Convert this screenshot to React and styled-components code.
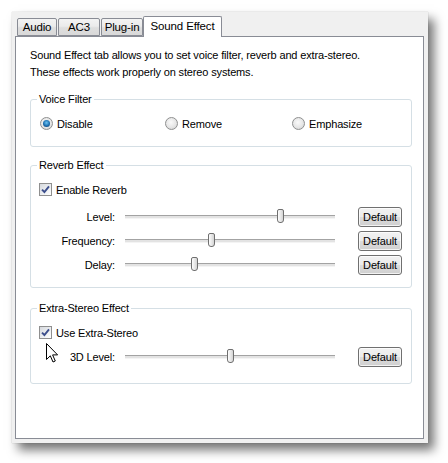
import React from 'react'
import styled, { createGlobalStyle } from 'styled-components'

const GlobalStyle = createGlobalStyle`
  html, body {
    margin: 0;
    padding: 0;
    background: #fff;
  }
  body {
    font-family: "Liberation Sans", Arial, sans-serif;
    font-size: 11px;
    letter-spacing: -0.15px;
    color: #000;
  }
`

const Page = styled.div`
  position: relative;
  width: 448px;
  height: 463px;
  padding: 12px 0 0 12px;
  box-sizing: border-box;
`

const Window = styled.div`
  width: 416px;
  height: 431px;
  box-sizing: border-box;
  background: #f0f0f0;
  padding: 4px 4px 4px 3px;
  display: flex;
  flex-direction: column;
  box-shadow: 6px 7px 10px rgba(0, 0, 0, 0.55), 0 0 1px rgba(0, 0, 0, 0.25);
`

const TabBar = styled.div`
  display: flex;
  align-items: flex-end;
  height: 20px;
  padding-left: 2px;
`

const Tab = styled.div`
  position: relative;
  box-sizing: border-box;
  width: ${p => p.$w}px;
  height: ${p => (p.$active ? 21 : 18)}px;
  margin-right: ${p => (p.$active ? 0 : 1)}px;
  margin-bottom: ${p => (p.$active ? -1 : 0)}px;
  margin-left: ${p => (p.$active ? -1 : 0)}px;
  border: 1px solid #898c95;
  border-bottom: ${p => (p.$active ? 'none' : '1px solid #898c95')};
  border-radius: 2px 2px 0 0;
  background: ${p =>
    p.$active
      ? '#fff'
      : 'linear-gradient(#f3f3f3 0%, #ebebeb 45%, #dedede 55%, #d9d9d9 100%)'};
  z-index: ${p => (p.$active ? 1 : 0)};
  display: flex;
  align-items: center;
  justify-content: center;
  padding-bottom: ${p => (p.$active ? 2 : 0)}px;
  font-size: 11.5px;
`

const TabPanel = styled.div`
  flex: 1;
  background: #fff;
  border: 1px solid #898c95;
  padding: 10px 11px 0 14px;
  display: flex;
  flex-direction: column;
`

const Intro = styled.p`
  margin: 0;
  line-height: 17px;
`

const Group = styled.fieldset`
  margin: ${p => p.$top}px 0 0 0;
  min-width: 0;
  border: 1px solid #d5dfe5;
  border-radius: 3px;
  padding: 8px 9px ${p => p.$bottom}px 8px;
  display: flex;
  flex-direction: column;
`

const Legend = styled.legend`
  padding: 0 2px;
  margin-left: -2px;
  line-height: 15px;
`

const RadioRow = styled.div`
  display: grid;
  grid-template-columns: 125px 127px 1fr;
  padding-left: 1px;
`

const Option = styled.label`
  display: flex;
  align-items: center;
  gap: 4px;
  height: 17px;
`

const RadioDot = styled.span`
  width: 13px;
  height: 13px;
  box-sizing: border-box;
  border-radius: 50%;
  border: 1px solid #8e8f8f;
  background: radial-gradient(circle at 45% 40%, #fafafa 0%, #e6e6e6 55%, #cbcbcb 100%);
  display: inline-flex;
  align-items: center;
  justify-content: center;
  &::after {
    content: '';
    display: ${p => (p.$on ? 'block' : 'none')};
    width: 7px;
    height: 7px;
    border-radius: 50%;
    background: radial-gradient(circle at 50% 40%, #6cc3f3 0%, #1c6fb0 55%, #0d2f5c 100%);
  }
`

const Box = styled.span`
  width: 13px;
  height: 13px;
  box-sizing: border-box;
  border: 1px solid #8f8f8f;
  background: linear-gradient(135deg, #d6d9de 0%, #eef0f2 60%, #ffffff 100%);
  display: inline-flex;
  align-items: center;
  justify-content: center;
`

const SliderRow = styled.div`
  display: flex;
  align-items: center;
  height: 20px;
  margin-top: ${p => p.$gap}px;
`

const SliderLabel = styled.span`
  width: 76px;
  text-align: right;
`

const Track = styled.div`
  position: relative;
  width: 210px;
  height: 2px;
  margin: 0 23px 0 10px;
  border-top: 1px solid #a3a3a3;
  background: #e3e3e3;
  border-bottom: 1px solid #f4f4f4;
`

const Thumb = styled.span`
  position: absolute;
  top: -7px;
  width: 7px;
  height: 14px;
  box-sizing: border-box;
  border: 1px solid #6f6f6f;
  border-radius: 2px 2px 3px 3px;
  background: linear-gradient(90deg, #fdfdfd 0%, #e9e9e9 50%, #d4d4d4 100%);
`

const DefaultButton = styled.button`
  width: 44px;
  height: 20px;
  box-sizing: border-box;
  padding: 0;
  border: 1px solid #707070;
  border-radius: 3px;
  background: linear-gradient(#f2f2f2 0%, #ebebeb 49%, #dddddd 50%, #cfcfcf 100%);
  box-shadow: inset 0 0 0 1px rgba(255, 255, 255, 0.75);
  font: inherit;
  font-size: 11px;
  letter-spacing: -0.15px;
  color: #000;
`

const Cursor = styled.svg`
  position: absolute;
  left: 46px;
  top: 343px;
`

const Radio = ({ on, children }) => (
  <Option>
    <RadioDot $on={on} />
    {children}
  </Option>
)

const Check = ({ children }) => (
  <Option>
    <Box>
      <svg width="9" height="9" viewBox="0 0 9 9">
        <path d="M1 4.6 L3.4 7 L8 1.4" fill="none" stroke="#3c4e8c" strokeWidth="1.9" />
      </svg>
    </Box>
    {children}
  </Option>
)

const Slider = ({ label, value, gap }) => (
  <SliderRow $gap={gap}>
    <SliderLabel>{label}</SliderLabel>
    <Track>
      <Thumb style={{ left: `calc(${value}% - 3px)` }} />
    </Track>
    <DefaultButton>Default</DefaultButton>
  </SliderRow>
)

const tabs = [
  { name: 'Audio', w: 40 },
  { name: 'AC3', w: 42 },
  { name: 'Plug-in', w: 42 },
  { name: 'Sound Effect', w: 79, active: true },
]

export default function App() {
  return (
    <Page>
      <GlobalStyle />
      <Window>
        <TabBar>
          {tabs.map(t => (
            <Tab key={t.name} $w={t.w} $active={t.active}>
              {t.name}
            </Tab>
          ))}
        </TabBar>
        <TabPanel>
          <Intro>
            Sound Effect tab allows you to set voice filter, reverb and extra-stereo.
            <br />
            These effects work properly on stereo systems.
          </Intro>

          <Group $top={11} $bottom={14}>
            <Legend>Voice Filter</Legend>
            <RadioRow>
              <Radio on>Disable</Radio>
              <Radio>Remove</Radio>
              <Radio>Emphasize</Radio>
            </RadioRow>
          </Group>

          <Group $top={11} $bottom={12}>
            <Legend>Reverb Effect</Legend>
            <Check>Enable Reverb</Check>
            <Slider label="Level:" value={74} gap={9} />
            <Slider label="Frequency:" value={41} gap={4} />
            <Slider label="Delay:" value={33} gap={4} />
          </Group>

          <Group $top={13} $bottom={16}>
            <Legend>Extra-Stereo Effect</Legend>
            <Check>Use Extra-Stereo</Check>
            <Slider label="3D Level:" value={50} gap={6} />
          </Group>
        </TabPanel>
      </Window>
      <Cursor width="13" height="21" viewBox="0 0 13 21">
        <path
          d="M0.5 0.5 L0.5 16.5 L4.3 12.8 L7 19 L9.3 18 L6.6 11.9 L11.6 11.9 Z"
          fill="#fff"
          stroke="#000"
          strokeWidth="1"
          strokeLinejoin="round"
        />
      </Cursor>
    </Page>
  )
}
